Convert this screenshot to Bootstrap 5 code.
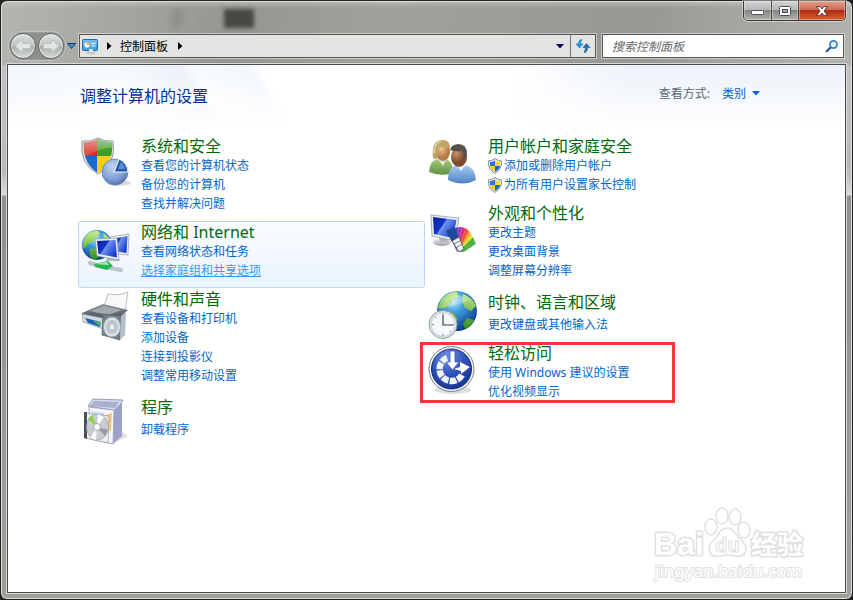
<!DOCTYPE html>
<html lang="zh-CN">
<head>
<meta charset="utf-8">
<meta name="viewport" content="width=device-width, initial-scale=1">
<title>控制面板</title>
<link href="https://cdn.jsdelivr.net/npm/bootstrap@5.3.0/dist/css/bootstrap.min.css" rel="stylesheet">
<style>
body{font-family:"Noto Sans","Noto Sans CJK SC",sans-serif;font-size:12px;line-height:19px;background:#222;color:#111}
svg{overflow:visible;flex:none;display:block}
.win{border:1px solid #222;border-radius:7px;padding:0 6px 6px;box-shadow:inset 0 0 0 1px #dcdcda;
 background:linear-gradient(#c9c9c6aa,#9c9c9700 7px) ,linear-gradient(180deg,transparent 64px,#c5c1c1 64px,#bdb9b9 170px,#dedada 194px,#918f8f 195px,#a0a09b) ,linear-gradient(100deg,#b4b4b1 0,#a9a9a5 90px,#969691 230px,#a1a19b 380px,#989893 640px,#a5a5a0 720px,#bdbdb8)}
.titlebar{height:33px}
.smudge{width:30px;height:19px;margin-top:8px;background:#474745;filter:blur(2px)}
.smudge-pale{width:22px;height:19px;margin:8px 30px 0 165px;background:linear-gradient(90deg,#8b8884,#a1a19d);filter:blur(3px)}
.caption-set{height:20px;border:1px solid #3c3c3c;border-top:0;border-radius:0 0 5px 5px;overflow:hidden;box-shadow:0 0 0 1px #ffffff66}
.caption-set button{border:0;padding:0;height:19px;width:28px;display:grid;place-items:center;background:linear-gradient(#d5d5d3,#b7b7b4 45%,#858582 50%,#b0b0ac);box-shadow:inset 0 0 0 1px #ffffff55;border-right:1px solid #444}
.caption-set .wide{width:27px}
.caption-set .shut{width:46px;border-right:0;background:linear-gradient(#e5a08f,#cf6a56 45%,#b02a15 50%,#d9622f)}
.toolrow{height:24px;gap:6px;margin:0 2px 6px 3px}
.travel{width:54px;height:26px;border-radius:13px;background:#8e8e8b;box-shadow:0 0 0 1px #77777788,0 0 1px 2px #ffffff44;gap:2px}
.travel button{width:26px;height:26px;border-radius:50%;border:1px solid #66696c;padding:0;display:grid;place-items:center;background:linear-gradient(#dfe2e3,#bfc3c4 48%,#a6abad 50%,#d5dada);box-shadow:inset 0 0 0 1px #ffffffaa}
.plain{border:0;background:none;padding:0}
.recent{width:9px;margin-left:-3px}
.field{height:24px;border:1px solid #555;box-shadow:0 0 0 1px #ffffff77;background:#e4e4e2}
.address{margin-left:-3px}
.crumbs{gap:8px;padding-left:2px}
.refresh{width:25px;height:22px;border-left:1px solid #777}
.finder{width:242px;background:#fff}
.finder input{font-style:italic;color:#555;background:none;padding:0 0 0 9px;min-width:0;outline:0}
.finder input::placeholder{color:#666;opacity:1}
.panel{border:1px solid #4c4c4c;box-shadow:0 0 0 1px #d8d8d8;
 background:linear-gradient(#fff0,#fff) 0 0/100% 66px no-repeat,
 linear-gradient(60deg,#eff4fb 0,#f7fafd 120px,#e9f0f8 180px,#f8fbfd 192px,#f2f6fb 240px,#fff 252px) 0 0/300px 66px no-repeat,
 linear-gradient(90deg,#fff 60%,#edf2fa 74%) 0 0/100% 66px no-repeat,#fff}
.panel-in{padding:0 73px 0 70px}
.headline{height:70px;padding:19px 12px 0 2px}
h1{font-size:16px;line-height:24px;color:#039;margin:0}
.viewby{color:#5a6675;gap:12px}
.viewby select{appearance:none;border:0;background:none;color:#06c;padding:0;width:26px;line-height:19px}
.tile{border:1px solid transparent;border-radius:3px;padding:0 0 7px 2px;gap:12px}
.tile>svg{margin-top:2px;width:48px;height:48px}
.tile.hot{border-color:#b8d6fb;background:linear-gradient(#fafcff,#ebf3fd)}
.tile h2{font-size:16px;line-height:20px;margin:0;color:#006b0b}
.tile h2 a{color:#006b0b}
.tile a{text-decoration:none;color:#06c;white-space:nowrap}
.tile.hot a.over{color:#39f;text-decoration:underline}
.tile ul{margin:0}
.tile li{display:flex;align-items:center;gap:2px;height:19px}
.single{padding-top:3px;padding-bottom:2px}
.single>svg{margin-top:-1px}
.single ul{padding-top:3px}
.ring{inset:-1px 96px 5px -6px;border:3px solid #f6353a;pointer-events:none}
.stamp{right:38px;bottom:9px;pointer-events:none}
</style>
<script src="https://cdn.jsdelivr.net/npm/bootstrap@5.3.0/dist/js/bootstrap.bundle.min.js"></script>
</head>
<body>
<svg width="0" height="0" class="position-absolute" aria-hidden="true">
<defs>
<radialGradient id="globe" cx=".4" cy=".25" r=".8"><stop offset="0" stop-color="#b9eaff"/><stop offset=".35" stop-color="#3f9fdd"/><stop offset="1" stop-color="#062f86"/></radialGradient>
<linearGradient id="land" x2="0" y2="1"><stop stop-color="#c8ee8c"/><stop offset="1" stop-color="#2e8b1d"/></linearGradient>
<linearGradient id="screen" x2="1" y2=".6"><stop stop-color="#0a1d9c"/><stop offset=".45" stop-color="#1433c8"/><stop offset=".5" stop-color="#6f93ee"/><stop offset="1" stop-color="#1a3fd0"/></linearGradient>
<linearGradient id="metal" x2="0" y2="1"><stop stop-color="#f7f8f9"/><stop offset="1" stop-color="#9ca2a8"/></linearGradient>
<linearGradient id="dark" x2="0" y2="1"><stop stop-color="#8b9299"/><stop offset="1" stop-color="#343a40"/></linearGradient>
<radialGradient id="pie" cx=".4" cy=".3" r=".8"><stop stop-color="#c2d6f2"/><stop offset=".6" stop-color="#7d9fd4"/><stop offset="1" stop-color="#41639f"/></radialGradient>
<radialGradient id="ease" cx=".4" cy=".2" r=".9"><stop stop-color="#6f92e4"/><stop offset=".5" stop-color="#2e50b8"/><stop offset="1" stop-color="#142f8e"/></radialGradient>
<linearGradient id="gl" x2="0" y2="1"><stop stop-color="#fff" stop-opacity=".5"/><stop offset="1" stop-color="#fff" stop-opacity="0"/></linearGradient>
<radialGradient id="skin" cx=".4" cy=".3"><stop stop-color="#f2c898"/><stop offset="1" stop-color="#b67b45"/></radialGradient>
<radialGradient id="skin2" cx=".35" cy=".3"><stop stop-color="#c99468"/><stop offset="1" stop-color="#7d4c2e"/></radialGradient>
<linearGradient id="greenTop" x2="0" y2="1"><stop stop-color="#a8cc83"/><stop offset="1" stop-color="#5c9140"/></linearGradient>
<linearGradient id="blueTop" x2="0" y2="1"><stop stop-color="#a9cdf2"/><stop offset="1" stop-color="#4d82c4"/></linearGradient>
<clipPath id="shieldClip"><path d="M3 4Q10 5 17 1Q24 5 31 4Q33 25 17 35Q1 25 3 4Z"/></clipPath>
<symbol id="uac" viewBox="0 0 14 16"><path d="M.6 2.800Q4 3 7 .6Q10 3 13.400 2.800Q14.500 11 7 15.500Q-.5 11 .6 2.800Z" fill="#e8ebee" stroke="#6d7a86" stroke-width=".8"/><path d="M2 4Q5 4 7 2.400V8H1.900Z" fill="#1f7ad4"/><path d="M12 4Q9 4 7 2.400V8H12.100Z" fill="#ffd638"/><path d="M1.900 8H7V14Q2.600 11.500 1.900 8Z" fill="#ffc928"/><path d="M12.100 8H7V14Q11.400 11.500 12.100 8Z" fill="#1668c5"/></symbol>
</defs>
</svg>

<div class="win min-vh-100 d-flex flex-column">
 <header class="titlebar d-flex align-items-start">
  <div class="smudge-pale"></div><div class="smudge"></div>
  <div class="caption-set d-flex ms-auto">
   <button type="button" aria-label="最小化"><svg width="13" height="6"><rect x=".5" y="2.500" width="12" height="4" rx="1" fill="#fff" stroke="#4b4d60"/></svg></button>
   <button type="button" class="wide" aria-label="最大化"><svg width="12" height="10"><rect x=".5" y=".5" width="11" height="9" rx="1" fill="#fff" stroke="#4b4d60"/><rect x="3.500" y="3.500" width="5" height="3" fill="#a0a0a0" stroke="#4b4d60"/></svg></button>
   <button type="button" class="shut" aria-label="关闭"><svg width="12" height="10"><path d="M.6.6H4L6 2.900 8 .6h3.400L8 5l3.400 4.400H8L6 7.100 4 9.400H.6L4 5Z" fill="#fff" stroke="#5b2b2b" stroke-width=".9"/></svg></button>
  </div>
 </header>

 <nav class="toolrow d-flex align-items-center" aria-label="导航">
  <div class="travel d-flex flex-shrink-0">
   <button type="button" aria-label="后退"><svg width="18" height="16"><path d="M1 8 8.500 1.500V5.500H16.500V10.500H8.500V14.500Z" fill="#e2e6e6" stroke="#bcc2c3"/></svg></button>
   <button type="button" aria-label="前进"><svg width="18" height="16"><path d="M17 8 9.500 1.500V5.500H1.500V10.500H9.500V14.500Z" fill="#e2e6e6" stroke="#bcc2c3"/></svg></button>
  </div>
  <button type="button" class="plain recent" aria-label="最近浏览的位置"><svg width="9" height="6"><path d="M.5 .5H8.500L4.500 5.500Z" fill="#3a8fd6" stroke="#123f73"/></svg></button>
  <div class="address field d-flex align-items-center flex-grow-1">
   <div class="crumbs d-flex align-items-center flex-grow-1">
    <svg width="17" height="17"><rect x=".5" y="1.500" width="15" height="11" rx="1" fill="#43a0e2" stroke="#1c6cae"/><path d="M1 2H15V6Q8 9 1 7Z" fill="#8ccbf3" opacity=".6"/><circle cx="5" cy="7" r="2.600" fill="#fff"/><path d="M5 7V4.400A2.600 2.600 0 0 1 7.600 7Z" fill="#f39a20"/><path d="M9.500 5.500H13.500M9.500 8H13.500" stroke="#fff"/><ellipse cx="9" cy="14.500" rx="4.500" ry="2" fill="#c3c8cd"/><path d="M7 11h4v3H7z" fill="#dfe3e6"/></svg>
    <svg width="5" height="8"><path d="M0 0 4.500 4 0 8Z"/></svg>
    <a href="#" class="text-black text-decoration-none">控制面板</a>
    <svg width="5" height="8"><path d="M2 0 6.500 4 2 8Z"/></svg>
   </div>
   <button type="button" class="plain me-1" aria-label="以前的位置"><svg width="10" height="5"><path d="M0 0H8L4 4.500Z" fill="#000060"/></svg></button>
   <div class="refresh d-flex"><button type="button" class="plain m-auto" aria-label="刷新"><svg width="16" height="14"><path d="M7 .5Q3.500.5 3.500 5H1L4.500 9 8 5H5.600Q5.500 2.500 7 .5Z" fill="#279be0" stroke="#1c76bc" stroke-width=".6"/><path d="M9 13.500Q12.500 13.500 12.500 8.500H15L11.500 4.500 8 8.500H10.400Q10.500 11.500 9 13.500Z" fill="#2b72c3" stroke="#1a4f96" stroke-width=".6"/></svg></button></div>
  </div>
  <form class="finder field d-flex align-items-center flex-shrink-0">
   <input type="search" class="border-0 flex-grow-1" aria-label="搜索控制面板" placeholder="搜索控制面板">
   <button type="button" class="plain me-1" aria-label="搜索"><svg width="14" height="13"><circle cx="8.500" cy="4.500" r="3.600" fill="#eef7ff" stroke="#2f86c9" stroke-width="1.700"/><path d="M5.800 7.200 1 12" stroke="#2b58a5" stroke-width="2.300"/></svg></button>
  </form>
 </nav>

 <main class="panel flex-grow-1 position-relative">
  <div class="panel-in">
   <div class="headline d-flex justify-content-between align-items-start">
    <h1 class="fw-normal">调整计算机的设置</h1>
    <div class="viewby d-flex align-items-center"><label for="view">查看方式:</label>
     <div class="d-flex align-items-center gap-1"><select id="view"><option>类别</option></select><svg width="8" height="5"><path d="M0 0H8L4 4.500Z" fill="#06c"/></svg></div>
    </div>
   </div>
   <div class="row g-0">
    <div class="col-6">
     <section class="tile d-flex">
      <svg viewBox="0 0 48 48" aria-hidden="true"><ellipse cx="38" cy="45" rx="12" ry="3" fill="#999" opacity=".35"/><path d="M1 3Q10 4 17 0Q24 4 32 3Q36 26 17 36Q-2 26 1 3Z" fill="#dcdfe2" stroke="#9a9fa4"/><g clip-path="url(#shieldClip)"><path d="M0 0H16V18H0Z" fill="#d93025"/><path d="M16 0H35V18H16Z" fill="#3c9e22"/><path d="M0 18H16V38H0Z" fill="#1769cb"/><path d="M16 18H35V38H16Z" fill="#fbcc18"/><path d="M0 0H35V9Q17 10 0 21Z" fill="url(#gl)"/></g><circle cx="34" cy="34" r="13" fill="url(#pie)" stroke="#5d7dae" stroke-width=".7"/><path d="M33 34 38 21Q46 24 47 34Z" fill="#2857a8" stroke="#e8f1fc" stroke-width="1.200"/><path d="M37 31 40 24Q43 26 44 31Z" fill="#5c8bd0"/></svg>
      <div><h2 class="fw-normal"><a href="#">系统和安全</a></h2><ul class="list-unstyled"><li><a href="#">查看您的计算机状态</a></li><li><a href="#">备份您的计算机</a></li><li><a href="#">查找并解决问题</a></li></ul></div>
     </section>
     <section class="tile hot d-flex">
      <svg viewBox="0 0 48 48" aria-hidden="true"><circle cx="16" cy="21" r="15" fill="url(#globe)"/><path d="M4 13Q9 6 17 7Q21 10 15 13L13 17 7 20Q4 25 2 24Q1 18 4 13ZM9 25Q15 23 19 28Q18 34 14 36Q7 33 9 25ZM22 9Q29 13 30 18L23 17Z" fill="url(#land)"/><path d="M29 13 48 10 47 31 31 29Z" fill="#eef2f4" stroke="#8d979e" stroke-width=".7"/><path d="M31 15 46.500 12 45.500 29 32 27Z" fill="url(#screen)"/><path d="M26 34 35 33 39 37H25Z" fill="#b2bac0"/><path d="M14 15 36 14 38 36 16 32Z" fill="#edf1f3" stroke="#8d979e" stroke-width=".7"/><path d="M16 17 34.500 16 36 33.500 17.500 30Z" fill="url(#screen)"/><path d="M9 39Q22 43 40 46" fill="none" stroke="#bbc6cc" stroke-width="4" stroke-linecap="round"/><path d="M13 40 27 37 32 42 26 46 14 43Z" fill="#27b353"/><path d="M14 40 26 38 28 41Z" fill="#a4edb7"/></svg>
      <div><h2 class="fw-normal"><a href="#">网络和 Internet</a></h2><ul class="list-unstyled"><li><a href="#">查看网络状态和任务</a></li><li><a href="#" class="over">选择家庭组和共享选项</a></li></ul></div>
     </section>
     <section class="tile d-flex">
      <svg viewBox="0 0 48 48" aria-hidden="true"><path d="M27 3Q39 5 47 1L44 20 22 18Z" fill="#f6f8fa" stroke="#a8adb2" stroke-width=".8"/><path d="M1 22 22 13 47 19 32 33 2 28Z" fill="url(#dark)"/><path d="M9 20 23 15 41 19 27 24Z" fill="#a3aaaf"/><path d="M1 23 26 28 25 39 2 31Z" fill="#d4d9dc" stroke="#9aa1a7" stroke-width=".7"/><path d="M4 27 20 31 19 36 7 32Z" fill="#1a63bc"/><path d="M12 30 20 31 19 35Z" fill="#52ba5c"/><path d="M22 23 40 25 39 49 21 44Z" fill="#74818d" stroke="#535f68" stroke-width=".7"/><path d="M40 25 45 22 44 44 39 49Z" fill="#b4bec6"/><ellipse cx="31" cy="36" rx="8.500" ry="10" fill="#dde3e6" stroke="#9ba5ac"/><ellipse cx="31" cy="36" rx="6" ry="7" fill="#bcc5cb"/><ellipse cx="31" cy="36" rx="2" ry="2.500" fill="#f2f5f6"/></svg>
      <div><h2 class="fw-normal"><a href="#">硬件和声音</a></h2><ul class="list-unstyled"><li><a href="#">查看设备和打印机</a></li><li><a href="#">添加设备</a></li><li><a href="#">连接到投影仪</a></li><li><a href="#">调整常用移动设置</a></li></ul></div>
     </section>
     <section class="tile single d-flex">
      <svg viewBox="0 0 48 48" aria-hidden="true"><path d="M35 46 47 40 42 36Z" fill="#999" opacity=".3"/><path d="M7 10 12 3 42 4 36 15Z" fill="#d4d9ec" stroke="#8288ab" stroke-width=".8"/><path d="M13 5 38 6 34 12 9 10Z" fill="#a9b0d0"/><path d="M8 11 33 14 32 48 9 43Z" fill="#f4f5fb" stroke="#9095b5" stroke-width=".8"/><path d="M33 14 41 6V40L32 48Z" fill="#9aa2c9"/><path d="M24 19 31 17 30 35 24 32Z" fill="#f4c77f"/><path d="M10 15 23 17V28L10 25Z" fill="#c6e0f5"/><path d="M4 17 28 20 27 47 4 42Z" fill="#edf2f4aa" stroke="#969ca1" stroke-width=".7"/><path d="M3 16V42L6 43V16Z" fill="#4b5057"/><ellipse cx="16.500" cy="31" rx="11" ry="13" fill="#c8ccd0" stroke="#989da1" stroke-width=".6"/><path d="M16 31 7 23 11 19Z" fill="#88d33f"/><path d="M16 31 17 18 23 21Z" fill="#fff"/><path d="M16 31 9 42 15 44Z" fill="#f8f8f8"/><path d="M16 31 27 34 24 40Z" fill="#94999e"/><circle cx="16" cy="31" r="3.500" fill="#fff" stroke="#9da3a7"/></svg>
      <div><h2 class="fw-normal"><a href="#">程序</a></h2><ul class="list-unstyled"><li><a href="#">卸载程序</a></li></ul></div>
     </section>
    </div>
    <div class="col-6">
     <section class="tile d-flex">
      <svg viewBox="0 0 48 48" aria-hidden="true"><path d="M1 34Q2 22 10 21H18Q25 23 25 35Q13 39 1 34Z" fill="url(#greenTop)"/><path d="M10 21 15 28 19 21Z" fill="#e6e8da"/><ellipse cx="15" cy="14" rx="7" ry="9" fill="url(#skin)"/><path d="M5 20Q3 3 13 2Q22 1 22 10Q15 10 12 8Q9 11 10 20Q7 22 5 20Z" fill="#c0a468"/><path d="M6 15Q6 5 13 3" fill="none" stroke="#e2cf98" stroke-width="2"/><path d="M20 42Q20 28 30 27H37Q47 29 48 42Q35 49 20 42Z" fill="url(#blueTop)"/><path d="M28 27 33 33 38 27Z" fill="#e7f1fc"/><ellipse cx="31" cy="19" rx="8" ry="10" fill="url(#skin2)"/><path d="M22 15Q21 7 30 6Q39 6 39 16L37 22 35 13Q27 14 22 12Z" fill="#55504d"/></svg>
      <div><h2 class="fw-normal"><a href="#">用户帐户和家庭安全</a></h2><ul class="list-unstyled"><li><svg width="14" height="16"><use href="#uac"/></svg><a href="#">添加或删除用户帐户</a></li><li><svg width="14" height="16"><use href="#uac"/></svg><a href="#">为所有用户设置家长控制</a></li></ul></div>
     </section>
     <section class="tile d-flex">
      <svg viewBox="0 0 48 48" aria-hidden="true"><ellipse cx="14" cy="37" rx="9" ry="4" fill="url(#metal)"/><path d="M10 30H18L20 37H12Z" fill="#b0b7bf"/><path d="M3 10 31 13 27 36 4 31Z" fill="#e8edf1" stroke="#949da8" stroke-width=".8"/><path d="M5 12 28.500 15 25 33 6 29Z" fill="url(#screen)"/><g stroke="#fff" stroke-width=".2"><path d="M29 47 20 27 26 23 33 46Z" fill="#1844a3"/><path d="M29 47 26 23 31 22 33 46Z" fill="#4a3bb4"/><path d="M29 47 30 22 35 22 34 46Z" fill="#9b37be"/><path d="M29 47 34 22 39 24 35 46Z" fill="#e52a78"/><path d="M29 47 38 23 42 27 35 46Z" fill="#ef542c"/><path d="M30 47 41 26 44 31 36 46Z" fill="#f6a528"/><path d="M30 47 43 29 46 34 36 46Z" fill="#eadf29"/><path d="M30 47 45 32 48 39 36 47Z" fill="#50b447"/></g><path d="M18 26 26 22 31 33 24 37Z" fill="#1c4a97"/><path d="M24 36 31 32 36 44 31 47Z" fill="#edf0f2" stroke="#394552" stroke-width=".7"/><path d="M26 39 32 36M28 43 34 39" stroke="#4f5a66" stroke-width=".8"/></svg>
      <div><h2 class="fw-normal"><a href="#">外观和个性化</a></h2><ul class="list-unstyled"><li><a href="#">更改主题</a></li><li><a href="#">更改桌面背景</a></li><li><a href="#">调整屏幕分辨率</a></li></ul></div>
     </section>
     <section class="tile single d-flex">
      <svg viewBox="0 0 48 48" aria-hidden="true"><circle cx="29" cy="20" r="20" fill="url(#globe)"/><path d="M13 9Q20 1 29 1L31 6 25 8 22 14 15 18 10 17ZM18 20 26 22 30 28 27 36 22 35ZM35 3Q44 6 48 15L43 20 37 17 34 10ZM39 27 46 29Q43 36 37 38L35 33Z" fill="url(#land)"/><path d="M18 7Q29 1 41 8Q35 14 14 16Z" fill="#fff" opacity=".28"/><circle cx="15" cy="33.500" r="14" fill="#eef1f3" stroke="#929a9f"/><circle cx="15" cy="33.500" r="12" fill="#f5f7f8" stroke="#cdd3d6" stroke-width="1.500"/><path d="M15 24V34H25" fill="none" stroke="#36454f" stroke-width="1.200"/><path d="M15 22V24M15 43V45M4 33.500H6M24 33.500H26M7 26 8 27M22 40 23 41" stroke="#798991"/></svg>
      <div><h2 class="fw-normal"><a href="#">时钟、语言和区域</a></h2><ul class="list-unstyled"><li><a href="#">更改键盘或其他输入法</a></li></ul></div>
     </section>
     <section class="tile d-flex position-relative">
      <svg viewBox="0 0 48 48" aria-hidden="true"><ellipse cx="25" cy="45" rx="18" ry="4" fill="#777" opacity=".25"/><circle cx="23.500" cy="24" r="22.500" fill="#f3f5f7" stroke="#777f8c"/><circle cx="23.500" cy="24" r="20" fill="url(#ease)" stroke="#183078"/><path d="M34 30A12 12 0 1 1 19 13" fill="none" stroke="#f1f3f8" stroke-width="6.500" stroke-dasharray="6.600 1.200"/><path d="M22 6H27V17H31L24.500 25 18 17H22Z" fill="#fff" stroke="#3558b4" stroke-width=".8"/><path d="M26 24 32 22V17L42 22 33 29V26Z" fill="#fff"/></svg>
      <div><h2 class="fw-normal"><a href="#">轻松访问</a></h2><ul class="list-unstyled"><li><a href="#">使用 Windows 建议的设置</a></li><li><a href="#">优化视频显示</a></li></ul></div>
      <div class="ring position-absolute"></div>
     </section>
    </div>
   </div>
  </div>
  <svg class="stamp position-absolute" width="154" height="76" viewBox="0 0 154 76" fill="#fff" stroke="#e0e0e0" stroke-width="1.500">
   <text x="1" y="48" font-size="32" font-family="Liberation Sans,sans-serif" font-weight="700" paint-order="stroke" stroke-width="3" stroke-linejoin="round">Bai</text>
   <ellipse cx="58" cy="20" rx="6" ry="8"/><ellipse cx="69" cy="9" rx="6" ry="8"/><ellipse cx="82" cy="10" rx="6" ry="8"/><ellipse cx="91" cy="23" rx="6" ry="8"/>
   <path d="M74 21Q80 21 85 30Q93 36 93 43Q91 51 82 49Q74 47 67 49Q57 51 56 42Q57 35 63 31Q68 21 74 21Z"/>
   <text x="62" y="45" font-family="Liberation Sans,sans-serif" font-size="20" font-weight="700" stroke-width="1">du</text>
   <text x="98" y="47" font-family="Noto Sans CJK SC,sans-serif" font-size="26" font-weight="700" paint-order="stroke" stroke-width="3">经验</text>
   <text x="2" y="70" font-family="Noto Sans,sans-serif" font-size="17" paint-order="stroke" stroke-width="2">jingyan.baidu.com</text>
  </svg>
 </main>
</div>
</body>
</html>
